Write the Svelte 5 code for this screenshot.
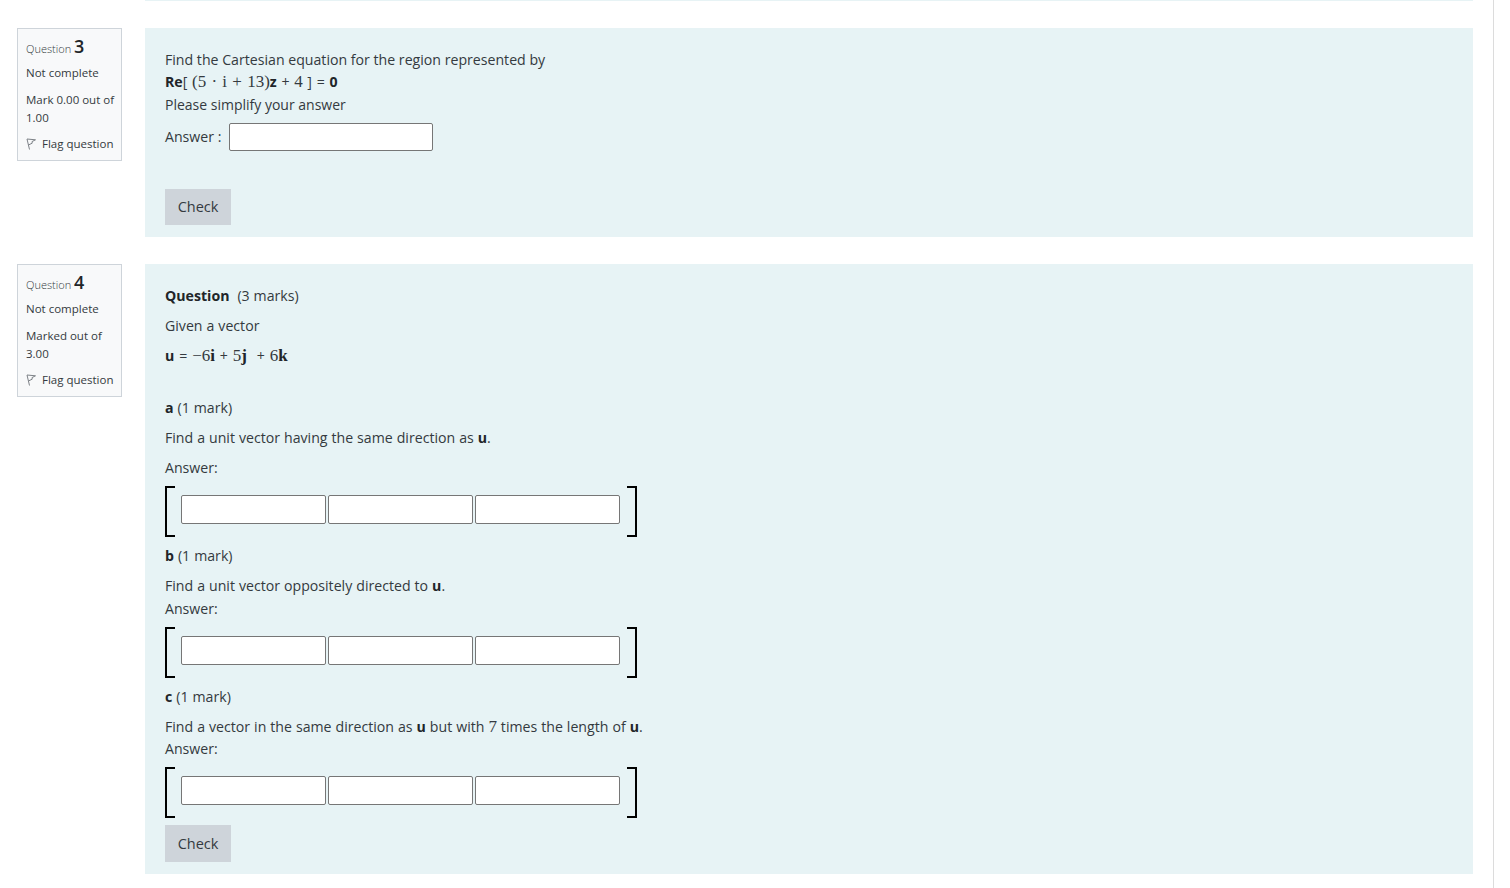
<script>
	const flagPath = 'M1 1 L3.5 11.5 M1 1 L9.5 1.8 L6 3.6 L6.2 5.2 L2.4 7';

	const parts = [
		{ id: 'a', label: 'a', tail: 'Find a unit vector having the same direction as ', gap: true },
		{ id: 'b', label: 'b', tail: 'Find a unit vector oppositely directed to ', gap: false },
		{ id: 'c', label: 'c', tail: '', gap: false }
	];
</script>

<div class="page">
	<div class="prev"></div>

	<div class="que">
		<aside class="info">
			<div class="qno">Question <b>3</b></div>
			<div class="state">Not complete</div>
			<div class="grade">Mark 0.00 out of 1.00</div>
			<div class="flag">
				<svg width="12" height="12" viewBox="0 0 12 12"><path d={flagPath} /></svg>
				Flag question
			</div>
		</aside>
		<section class="content q3">
			<p class="line1">Find the Cartesian equation for the region represented by</p>
			<p class="line2"><b>Re</b>[ <span class="math">(5 · i + 13)</span><b>z</b> + <span class="math">4</span> ] = <b>0</b></p>
			<p class="line3">Please simplify your answer</p>
			<div class="answer">
				<label for="a3">Answer :</label>
				<input id="a3" type="text" />
			</div>
			<button type="button" class="check">Check</button>
		</section>
	</div>

	<div class="que">
		<aside class="info">
			<div class="qno">Question <b>4</b></div>
			<div class="state">Not complete</div>
			<div class="grade">Marked out of 3.00</div>
			<div class="flag">
				<svg width="12" height="12" viewBox="0 0 12 12"><path d={flagPath} /></svg>
				Flag question
			</div>
		</aside>
		<section class="content q4">
			<p class="sp"><b>Question</b>&nbsp; (3 marks)</p>
			<p class="sp">Given a vector</p>
			<p class="vec"><b>u</b> = <span class="math">−6<b>i</b></span> + <span class="math">5<b>j</b></span>&nbsp; + <span class="math">6<b>k</b></span></p>

			{#each parts as part}
				<p class="sp"><b>{part.label}</b> (1 mark)</p>
				{#if part.id === 'c'}
					<p>Find a vector in the same direction as <b>u</b> but with <span class="math">7</span> times the length of <b>u</b>.</p>
				{:else}
					<p class:sp={part.gap}>{part.tail}<b>u</b>.</p>
				{/if}
				<p class="ans">Answer:</p>
				<div class="matrix">
					<input type="text" />
					<input type="text" />
					<input type="text" />
				</div>
			{/each}

			<button type="button" class="check last">Check</button>
		</section>
	</div>
</div>

<style>
	:global(body) {
		margin: 0;
		background: #fff;
	}

	.page {
		box-sizing: border-box;
		width: 1494px;
		height: 888px;
		overflow: hidden;
		padding-left: 17px;
		padding-right: 20px;
		border-right: 1px solid #dcdcdc;
		font-family: "Open Sans", "Noto Sans", sans-serif;
		font-size: 14.15px;
		line-height: 22.5px;
		color: #343a40;
	}

	.prev {
		height: 1px;
		margin-left: 128px;
		margin-bottom: 27px;
		background: #e7f3f5;
	}

	.que {
		display: flex;
		align-items: flex-start;
		gap: 23px;
		margin-bottom: 27px;
	}

	.info {
		box-sizing: border-box;
		flex: none;
		width: 105px;
		height: 133px;
		padding: 8px 6px 8px 8px;
		background: #f8f9fa;
		border: 1px solid #ced4da;
		font-size: 11.5px;
		line-height: 18px;
	}

	.qno {
		font-size: 11px;
		font-weight: 300;
		line-height: 22px;
		margin-top: -2px;
		margin-bottom: 4px;
	}

	.qno b {
		font-size: 18px;
		font-weight: 600;
		color: #212529;
	}

	.state {
		margin-bottom: 9px;
	}

	.grade {
		margin-bottom: 8px;
	}

	.flag {
		white-space: nowrap;
	}

	.flag svg {
		vertical-align: -2px;
		margin-right: 1px;
	}

	.flag path {
		fill: none;
		stroke: #7d8287;
		stroke-width: 1;
	}

	.content {
		box-sizing: border-box;
		flex: 1;
		background: #e7f3f5;
		padding: 0 20px;
	}

	.q3 {
		height: 209px;
		padding-top: 21px;
	}

	.q4 {
		height: 610px;
		padding-top: 21px;
	}

	p {
		margin: 0;
		white-space: nowrap;
		word-spacing: 0.3px;
	}

	p.sp {
		margin-bottom: 7.5px;
	}

	p.vec {
		margin-bottom: 29.5px;
		word-spacing: 1.2px;
	}

	p.line1 {
		word-spacing: 0;
		line-height: 22px;
	}

	p.line2 {
		word-spacing: 1px;
		line-height: 22px;
		margin-bottom: 1px;
	}

	p.line3 {
		word-spacing: 0;
		font-size: 14px;
	}

	p.ans {
		margin-bottom: 6.5px;
	}

	.math {
		font-family: "Liberation Serif", serif;
		font-size: 17px;
		line-height: 0;
	}

	b {
		font-weight: 700;
		color: #212529;
	}

	.math b {
		font-family: "Liberation Serif", serif;
	}

	.answer {
		display: flex;
		align-items: center;
		gap: 8px;
		margin-top: 6px;
		margin-bottom: 38px;
	}

	.answer label {
		flex: none;
		width: 56px;
		padding-top: 2px;
		white-space: nowrap;
	}

	input {
		box-sizing: border-box;
		margin: 0;
		height: 28px;
		padding: 0 4px;
		background: #fff;
		border: 1px solid #767676;
		border-radius: 2px;
	}

	.answer input {
		width: 204px;
	}

	.matrix {
		box-sizing: border-box;
		display: flex;
		align-items: center;
		gap: 2px;
		width: 472px;
		height: 51px;
		padding: 0 0 4px 14px;
		margin-bottom: 8px;
		border-left: 2px solid #000;
		border-right: 2px solid #000;
		position: relative;
	}

	.matrix::before,
	.matrix::after {
		content: "";
		position: absolute;
		top: 0;
		bottom: 0;
		width: 8px;
		border-top: 2px solid #000;
		border-bottom: 2px solid #000;
	}

	.matrix::before {
		left: 0;
	}

	.matrix::after {
		right: 0;
	}

	.matrix input {
		flex: none;
		width: 145px;
		height: 29px;
	}

	.check {
		display: block;
		width: 66px;
		height: 36px;
		padding: 2px 0 0;
		border: 0;
		background: #ced4da;
		color: #343a40;
		font: inherit;
		font-size: 14.5px;
	}

	.check.last {
		height: 37px;
		margin-top: -1px;
		padding-top: 2px;
	}
</style>
